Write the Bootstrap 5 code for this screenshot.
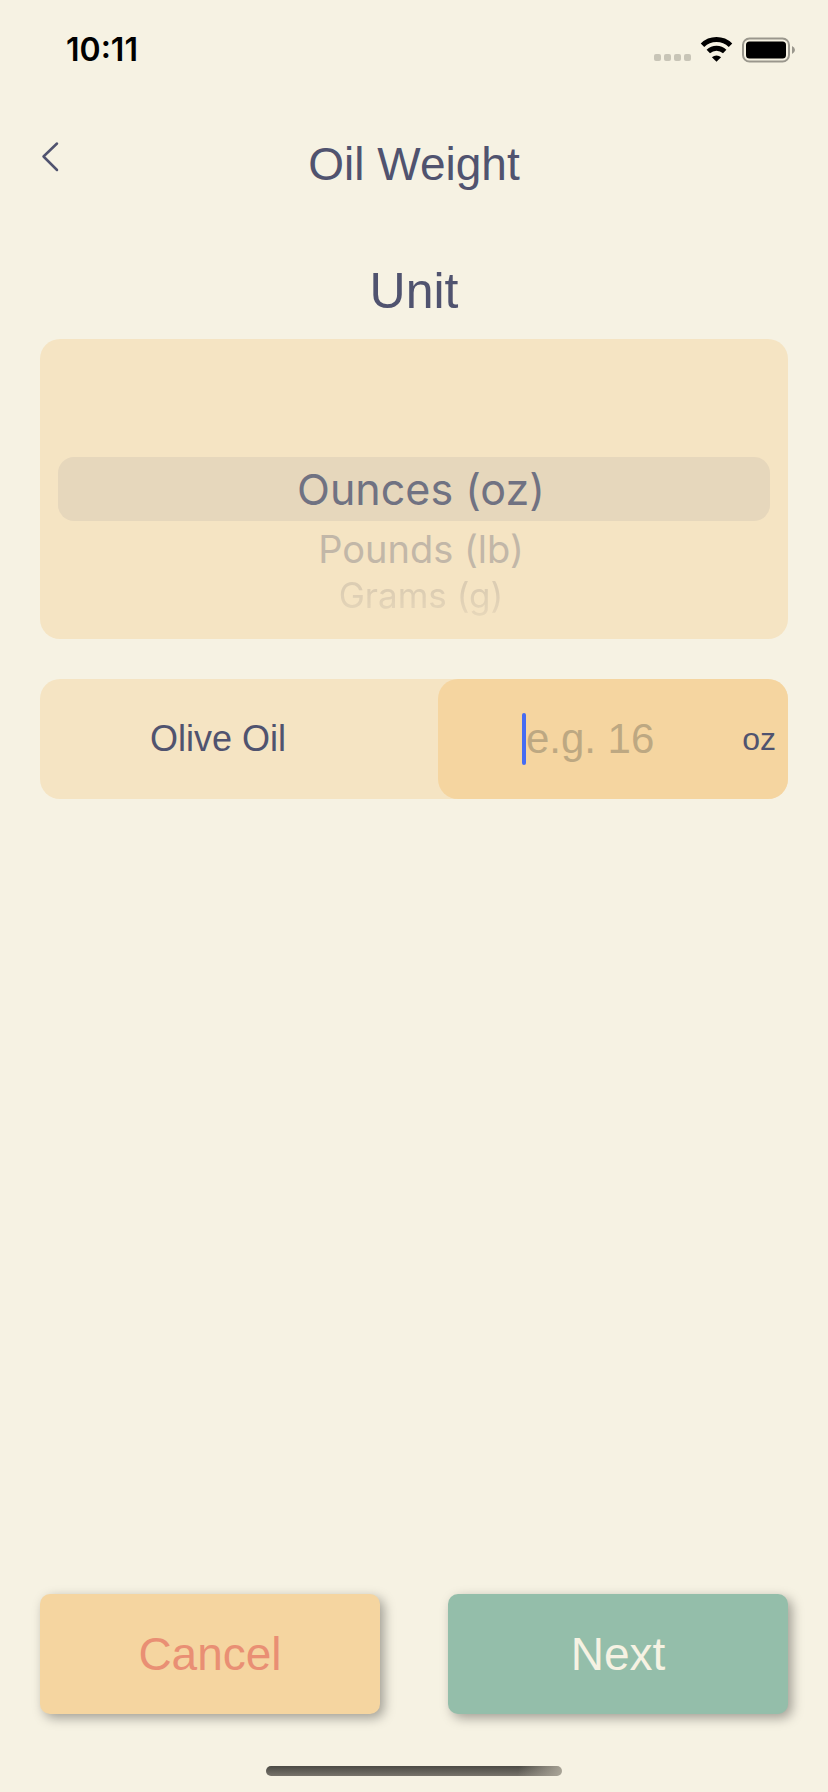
<!DOCTYPE html>
<html lang="en">
<head>
<meta charset="utf-8">
<meta name="viewport" content="width=device-width, initial-scale=1">
<title>Oil Weight</title>
<link href="https://cdn.jsdelivr.net/npm/bootstrap@5.3.0/dist/css/bootstrap.min.css" rel="stylesheet">
<style>
  :root { --cream: #f6f2e3; --sand: #f5e4c3; --peach: #f5d5a0; --ink: #50536f; --sage: #94beaa; --coral: #e98f74; }
  body { background: var(--cream); color: var(--ink); font-family: "Liberation Sans", Arial, sans-serif; }
  .status-bar { height: 100px; padding: 0 32px 0 66px; color: #000; }
  .clock { font: 600 32px/40px Inter, sans-serif; }
  .title-bar { display: grid; grid-template-columns: 1fr auto 1fr; padding: 36px 40px 0; }
  .title-bar h1 { font-size: 46px; line-height: 56px; font-weight: 400; }
  .back-btn { height: 42px; color: var(--ink); }
  .page-main { padding: 69px 40px 0; }
  .unit-title { font-size: 50px; line-height: 60px; margin: 0 0 18px; }
  .wheel { height: 300px; background: var(--sand); border-radius: 20px; padding: 118px 18px 0; font-family: Inter, sans-serif; }
  .wheel label { display: flex; align-items: center; justify-content: center; padding-left: 14px; cursor: pointer; }
  .wheel .picked { height: 64px; border-radius: 16px; background: #e6d7bc; color: #707282; font-size: 43px; }
  .wheel .near { height: 56px; font-size: 38px; color: #c2b7a8; }
  .wheel .far { height: 48px; align-items: start; font-size: 35px; line-height: 36px; color: #dccdb3; -webkit-mask-image: linear-gradient(#000 30%, #0006); mask-image: linear-gradient(#000 30%, #0006); }
  .oil-row { margin-top: 40px; height: 120px; background: var(--sand); border-radius: 20px; }
  .oil-name { flex: 1 1 0; font-size: 36px; padding-right: 42px; }
  .oil-field { flex: 0 0 350px; background: var(--peach); border-radius: 20px; padding-right: 12px; }
  .oil-field input { font-size: 42px; line-height: 52px; color: var(--ink); }
  .oil-field input::placeholder { color: #bda882; opacity: 1; }
  .oil-field input:focus { outline: none; }
  .oil-unit { font-size: 32px; }
  .text-cursor { position: absolute; left: calc(50% - 68px); top: calc(50% - 26px); width: 4px; height: 52px; border-radius: 2px; background: #466cf2; }
  .actions { gap: 68px; padding: 0 40px; }
  .actions .btn { flex: 1 1 0; height: 120px; border: 0; border-radius: 10px; font-size: 46px; box-shadow: 4px 4px 12px rgba(0,0,0,.35); }
  .btn-cancel, .btn-cancel:hover { background: var(--peach); color: var(--coral); }
  .btn-next, .btn-next:hover { background: var(--sage); color: var(--cream); }
  .home-bar { width: 296px; height: 10px; margin: 52px auto 16px; border-radius: 5px; background: linear-gradient(100deg, transparent 85%, #aaa598 100%), linear-gradient(#4b4a44, #77736b); }
</style>
</head>
<body>
<div class="d-flex flex-column min-vh-100">
  <div class="status-bar d-flex justify-content-between align-items-center">
    <span class="clock">10:11</span>
    <svg width="142" height="26" viewBox="0 0 142 26" aria-hidden="true">
      <g fill="#c8c5b7"><rect y="17" width="7" height="7" rx="2"/><rect x="10" y="17" width="7" height="7" rx="2"/><rect x="20" y="17" width="7" height="7" rx="2"/><rect x="30" y="17" width="7" height="7" rx="2"/></g>
      <g fill="none" stroke="#000" stroke-width="5"><path d="M48.500 8.300a20 20 0 0 1 28 0"/><path d="M54.300 14.500a12 12 0 0 1 16.400 0"/></g>
      <path d="M62.500 24.800l-4.600-4.600a7 7 0 0 1 9.200 0z"/>
      <rect x="89" y="1.500" width="46" height="23" rx="6.500" fill="none" stroke="#9a978d" stroke-width="2"/>
      <rect x="92" y="4.500" width="40" height="17" rx="3.500"/>
      <path d="M138 9q3 1.500 3 4t-3 4z" fill="#9a978d"/>
    </svg>
  </div>

  <header class="title-bar">
    <button class="btn back-btn p-0 border-0 d-flex align-items-center" type="button" aria-label="Back">
      <svg width="20" height="32" viewBox="0 0 20 32" fill="none" stroke="currentColor" stroke-width="2.500" stroke-linecap="round" stroke-linejoin="round"><path d="M17 2.500L3.500 15.500L17 29"/></svg>
    </button>
    <h1 class="m-0">Oil Weight</h1>
  </header>

  <form class="d-flex flex-column flex-grow-1">
    <main class="page-main">
      <fieldset>
        <legend class="unit-title text-center float-none p-0">Unit</legend>
        <div class="wheel">
          <input class="visually-hidden" type="radio" name="unit" id="unit-oz" checked>
          <label class="picked" for="unit-oz">Ounces (oz)</label>
          <input class="visually-hidden" type="radio" name="unit" id="unit-lb">
          <label class="near" for="unit-lb">Pounds (lb)</label>
          <input class="visually-hidden" type="radio" name="unit" id="unit-g">
          <label class="far" for="unit-g">Grams (g)</label>
        </div>
      </fieldset>

      <div class="oil-row d-flex align-items-center">
        <label class="oil-name text-center" for="olive">Olive Oil</label>
        <div class="oil-field h-100 d-flex align-items-center">
          <div class="position-relative flex-grow-1">
            <input class="w-100 border-0 bg-transparent p-0 text-center d-block" id="olive" type="text" inputmode="decimal" placeholder="e.g. 16">
            <span class="text-cursor"></span>
          </div>
          <span class="oil-unit">oz</span>
        </div>
      </div>
    </main>

    <div class="actions d-flex mt-auto">
      <button class="btn btn-cancel" type="button">Cancel</button>
      <button class="btn btn-next" type="submit">Next</button>
    </div>
  </form>
  <div class="home-bar"></div>
</div>
<script src="https://cdn.jsdelivr.net/npm/bootstrap@5.3.0/dist/js/bootstrap.bundle.min.js"></script>
</body>
</html>
